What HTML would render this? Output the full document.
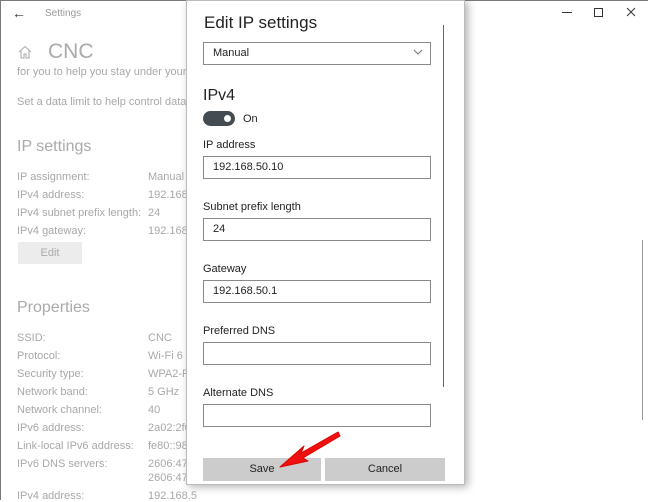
<!DOCTYPE html>
<html><head><style>
body{margin:0;width:648px;height:500px;overflow:hidden;background:#fff;font-family:"Liberation Sans",sans-serif;position:relative}
.a{position:absolute;white-space:nowrap}
.g{color:#a8a8a8;font-size:11px}
.inp{position:absolute;left:203px;width:226px;height:21px;border:1px solid #8a8a8a;background:#fff;font-size:11px;color:#222;line-height:21px;text-indent:9px;box-sizing:content-box}
.lbl{position:absolute;left:203px;font-size:11px;color:#222}
</style></head><body>
<div style="position:absolute;left:0;top:0;width:647px;height:499px;border:1px solid #7a7a7a;border-bottom:none"></div>
<div class="a" style="left:12px;top:5px;font-size:14px;color:#333">&#8592;</div>
<div class="a g" style="left:45px;top:8px;font-size:10px;color:#999">Settings</div>
<svg class="a" style="left:18px;top:45px" width="14" height="14" viewBox="0 0 14 14"><path d="M1 7 L7 1.5 L13 7 M3 5.5 V13 H6 V9 H8 V13 H11 V5.5" fill="none" stroke="#aaa" stroke-width="1"/></svg>
<div class="a" style="left:48px;top:40px;font-size:21px;color:#aaa">CNC</div>
<div class="a g" style="left:17px;top:66px">for you to help you stay under your lin</div>
<div class="a g" style="left:17px;top:96px">Set a data limit to help control data us</div>
<div class="a" style="left:17px;top:138px;font-size:16px;color:#aaa">IP settings</div>
<div class="a g" style="left:17px;top:171px">IP assignment:</div><div class="a g" style="left:148px;top:171px">Manual</div>
<div class="a g" style="left:17px;top:189px">IPv4 address:</div><div class="a g" style="left:148px;top:189px">192.168.5</div>
<div class="a g" style="left:17px;top:207px">IPv4 subnet prefix length:</div><div class="a g" style="left:148px;top:207px">24</div>
<div class="a g" style="left:17px;top:225px">IPv4 gateway:</div><div class="a g" style="left:148px;top:225px">192.168.5</div>
<div class="a" style="left:18px;top:242px;width:64px;height:22px;background:#ececec;color:#aaa;font-size:11px;text-align:center;line-height:22px">Edit</div>
<div class="a" style="left:17px;top:299px;font-size:16px;color:#aaa">Properties</div>
<div class="a g" style="left:17px;top:332px">SSID:</div><div class="a g" style="left:148px;top:332px">CNC</div>
<div class="a g" style="left:17px;top:350px">Protocol:</div><div class="a g" style="left:148px;top:350px">Wi-Fi 6 (</div>
<div class="a g" style="left:17px;top:368px">Security type:</div><div class="a g" style="left:148px;top:368px">WPA2-Pe</div>
<div class="a g" style="left:17px;top:386px">Network band:</div><div class="a g" style="left:148px;top:386px">5 GHz</div>
<div class="a g" style="left:17px;top:404px">Network channel:</div><div class="a g" style="left:148px;top:404px">40</div>
<div class="a g" style="left:17px;top:422px">IPv6 address:</div><div class="a g" style="left:148px;top:422px">2a02:2f0</div>
<div class="a g" style="left:17px;top:440px">Link-local IPv6 address:</div><div class="a g" style="left:148px;top:440px">fe80::981</div>
<div class="a g" style="left:17px;top:458px">IPv6 DNS servers:</div><div class="a g" style="left:148px;top:458px">2606:470</div>
<div class="a g" style="left:148px;top:472px">2606:470</div>
<div class="a g" style="left:17px;top:490px">IPv4 address:</div><div class="a g" style="left:148px;top:490px">192.168.5</div>
<div class="a" style="left:562px;top:12px;width:10px;height:0;border-top:1px solid #333"></div>
<div class="a" style="left:594px;top:8px;width:7px;height:7px;border:1px solid #333"></div>
<svg class="a" style="left:626px;top:7px" width="10" height="10"><path d="M1 1 L9 9 M9 1 L1 9" stroke="#333" stroke-width="1"/></svg>
<div class="a" style="left:642px;top:240px;width:1px;height:180px;background:#999"></div>
<!-- dialog -->
<div class="a" style="left:186px;top:0;width:277px;height:483px;background:#fff;border:1px solid #bbb;box-shadow:3px 2px 8px rgba(0,0,0,.3)"></div>
<div class="a" style="left:204px;top:13px;font-size:17px;color:#222">Edit IP settings</div>
<div class="inp" style="top:42px">Manual</div>
<svg class="a" style="left:413px;top:49px" width="10" height="7"><path d="M1 1 L5 5 L9 1" fill="none" stroke="#777"/></svg>
<div class="a" style="left:443px;top:25px;width:1px;height:362px;background:#666"></div>
<div class="a" style="left:203px;top:87px;font-size:16px;color:#222">IPv4</div>
<div class="a" style="left:203px;top:111px;width:32px;height:15px;border-radius:8px;background:#454c51"></div>
<div class="a" style="left:224px;top:115px;width:7px;height:7px;border-radius:50%;background:#fff"></div>
<div class="a" style="left:243px;top:113px;font-size:11px;color:#222">On</div>
<div class="lbl" style="top:139px">IP address</div>
<div class="inp" style="top:156px">192.168.50.10</div>
<div class="lbl" style="top:201px">Subnet prefix length</div>
<div class="inp" style="top:218px">24</div>
<div class="lbl" style="top:263px">Gateway</div>
<div class="inp" style="top:280px">192.168.50.1</div>
<div class="lbl" style="top:325px">Preferred DNS</div>
<div class="inp" style="top:342px"></div>
<div class="lbl" style="top:387px">Alternate DNS</div>
<div class="inp" style="top:404px"></div>
<div class="a" style="left:203px;top:458px;width:118px;height:23px;background:#ccc;font-size:11px;color:#222;text-align:center;line-height:23px">Save</div>
<div class="a" style="left:325px;top:458px;width:120px;height:23px;background:#ccc;font-size:11px;color:#222;text-align:center;line-height:23px">Cancel</div>
<svg class="a" style="left:270px;top:428px" width="80" height="45"><path d="M68 4 L31 25 L34 18 L10 39 L38 33 L33 30 L70 8 Z" fill="#f01010" stroke="#d00" stroke-width="1" stroke-linejoin="round"/></svg>
</body></html>
